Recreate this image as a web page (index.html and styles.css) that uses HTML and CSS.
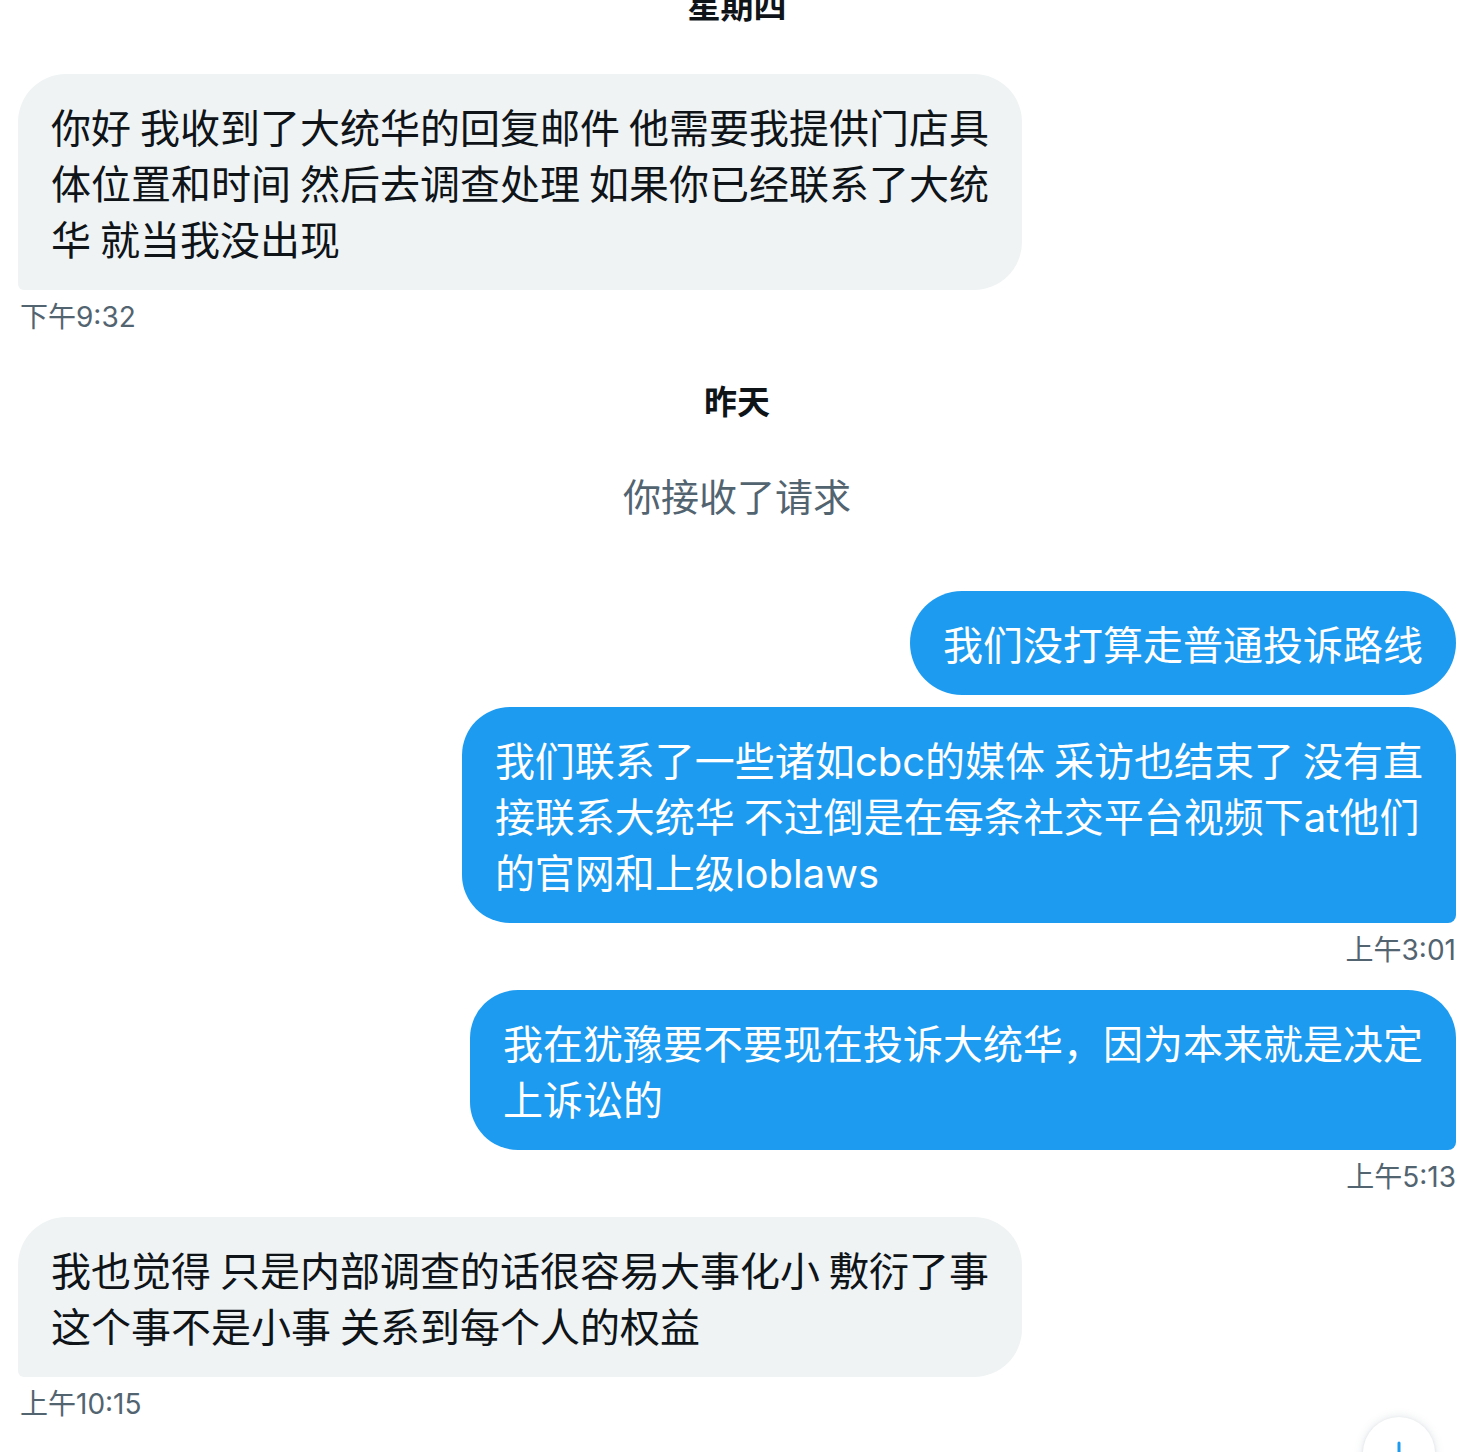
FILE: index.html
```html
<!DOCTYPE html>
<html lang="zh-CN">
<head>
<meta charset="utf-8">
<title>消息</title>
<link rel="stylesheet" href="styles.css">
</head>
<body>
<main class="chat">
  <div class="day day-first">星期四</div>

  <div class="row in">
    <div class="bubble grey">你好 我收到了大统华的回复邮件 他需要我提供门店具<br>体位置和时间 然后去调查处理 如果你已经联系了大统<br>华 就当我没出现</div>
  </div>
  <div class="ts">下午9:32</div>

  <div class="day day-mid">昨天</div>
  <div class="notice">你接收了请求</div>

  <div class="row out first">
    <div class="bubble blue round">我们没打算走普通投诉路线</div>
  </div>
  <div class="row out">
    <div class="bubble blue">我们联系了一些诸如<span class="lat">cbc</span>的媒体 采访也结束了 没有直<br>接联系大统华 不过倒是在每条社交平台视频下<span class="lat">at</span>他们<br>的官网和上级<span class="lat">loblaws</span></div>
  </div>
  <div class="ts right">上午3:01</div>

  <div class="row out">
    <div class="bubble blue">我在犹豫要不要现在投诉大统华，因为本来就是决定<br>上诉讼的</div>
  </div>
  <div class="ts right">上午5:13</div>

  <div class="row in">
    <div class="bubble grey">我也觉得 只是内部调查的话很容易大事化小 敷衍了事<br>这个事不是小事 关系到每个人的权益</div>
  </div>
  <div class="ts">上午10:15</div>
</main>

<button class="scroll-down" type="button" aria-label="滚动到底部">
  <svg width="32" height="32" viewBox="0 0 32 32" fill="none" stroke="#1d9bf0" stroke-width="3" stroke-linecap="round" stroke-linejoin="round">
    <path d="M16 6v20"/>
    <path d="M8 18l8 8 8-8"/>
  </svg>
</button>
</body>
</html>
```

FILE: styles.css
```css
html, body {
  margin: 0;
  padding: 0;
  background: #ffffff;
  overflow: hidden;
}

body {
  font-family: "Noto Sans CJK SC", "Noto Sans", sans-serif;
  color: #0f1419;
  width: 1461px;
  height: 1452px;
  position: relative;
}

.chat {
  display: flex;
  flex-direction: column;
  padding: 0 5px 0 18px;
}

.day {
  text-align: center;
  font-weight: 700;
  font-size: 33px;
  line-height: 50px;
  color: #0f1419;
}

.day-first {
  margin-top: -21px;
  margin-bottom: 45px;
}

.day-mid {
  margin-top: 18px;
}

.notice {
  text-align: center;
  font-size: 38px;
  line-height: 56px;
  color: #536471;
  margin-top: 42px;
  margin-bottom: 68px;
}

.row {
  display: flex;
}

.row.in {
  justify-content: flex-start;
}

.row.out {
  justify-content: flex-end;
}

.row.first {
  margin-bottom: 12px;
}

.bubble {
  font-size: 40px;
  line-height: 56px;
  padding: 24px 33px;
  white-space: nowrap;
  border-radius: 48px;
}

.bubble.grey {
  background: #eff3f4;
  color: #0f1419;
  border-bottom-left-radius: 6px;
}

.bubble.blue {
  background: #1d9bf0;
  color: #ffffff;
  border-bottom-right-radius: 8px;
}

.bubble.blue.round {
  border-radius: 52px;
}

.lat {
  font-family: "Inter", "Liberation Sans", sans-serif;
  line-height: 1;
}

.ts {
  font-family: "Inter", "Noto Sans CJK SC", sans-serif;
  font-size: 28px;
  line-height: 40px;
  color: #536471;
  margin-top: 7px;
  margin-bottom: 20px;
  padding-left: 2px;
}

.ts.right {
  text-align: right;
  padding-left: 0;
}

.scroll-down {
  position: absolute;
  left: 1363px;
  top: 1417px;
  width: 72px;
  height: 72px;
  border-radius: 50%;
  border: none;
  background: #ffffff;
  box-shadow: 0 0 10px rgba(101, 119, 134, 0.2), 0 1px 3px rgba(101, 119, 134, 0.15);
  display: flex;
  align-items: center;
  justify-content: center;
  padding: 0;
}
```
